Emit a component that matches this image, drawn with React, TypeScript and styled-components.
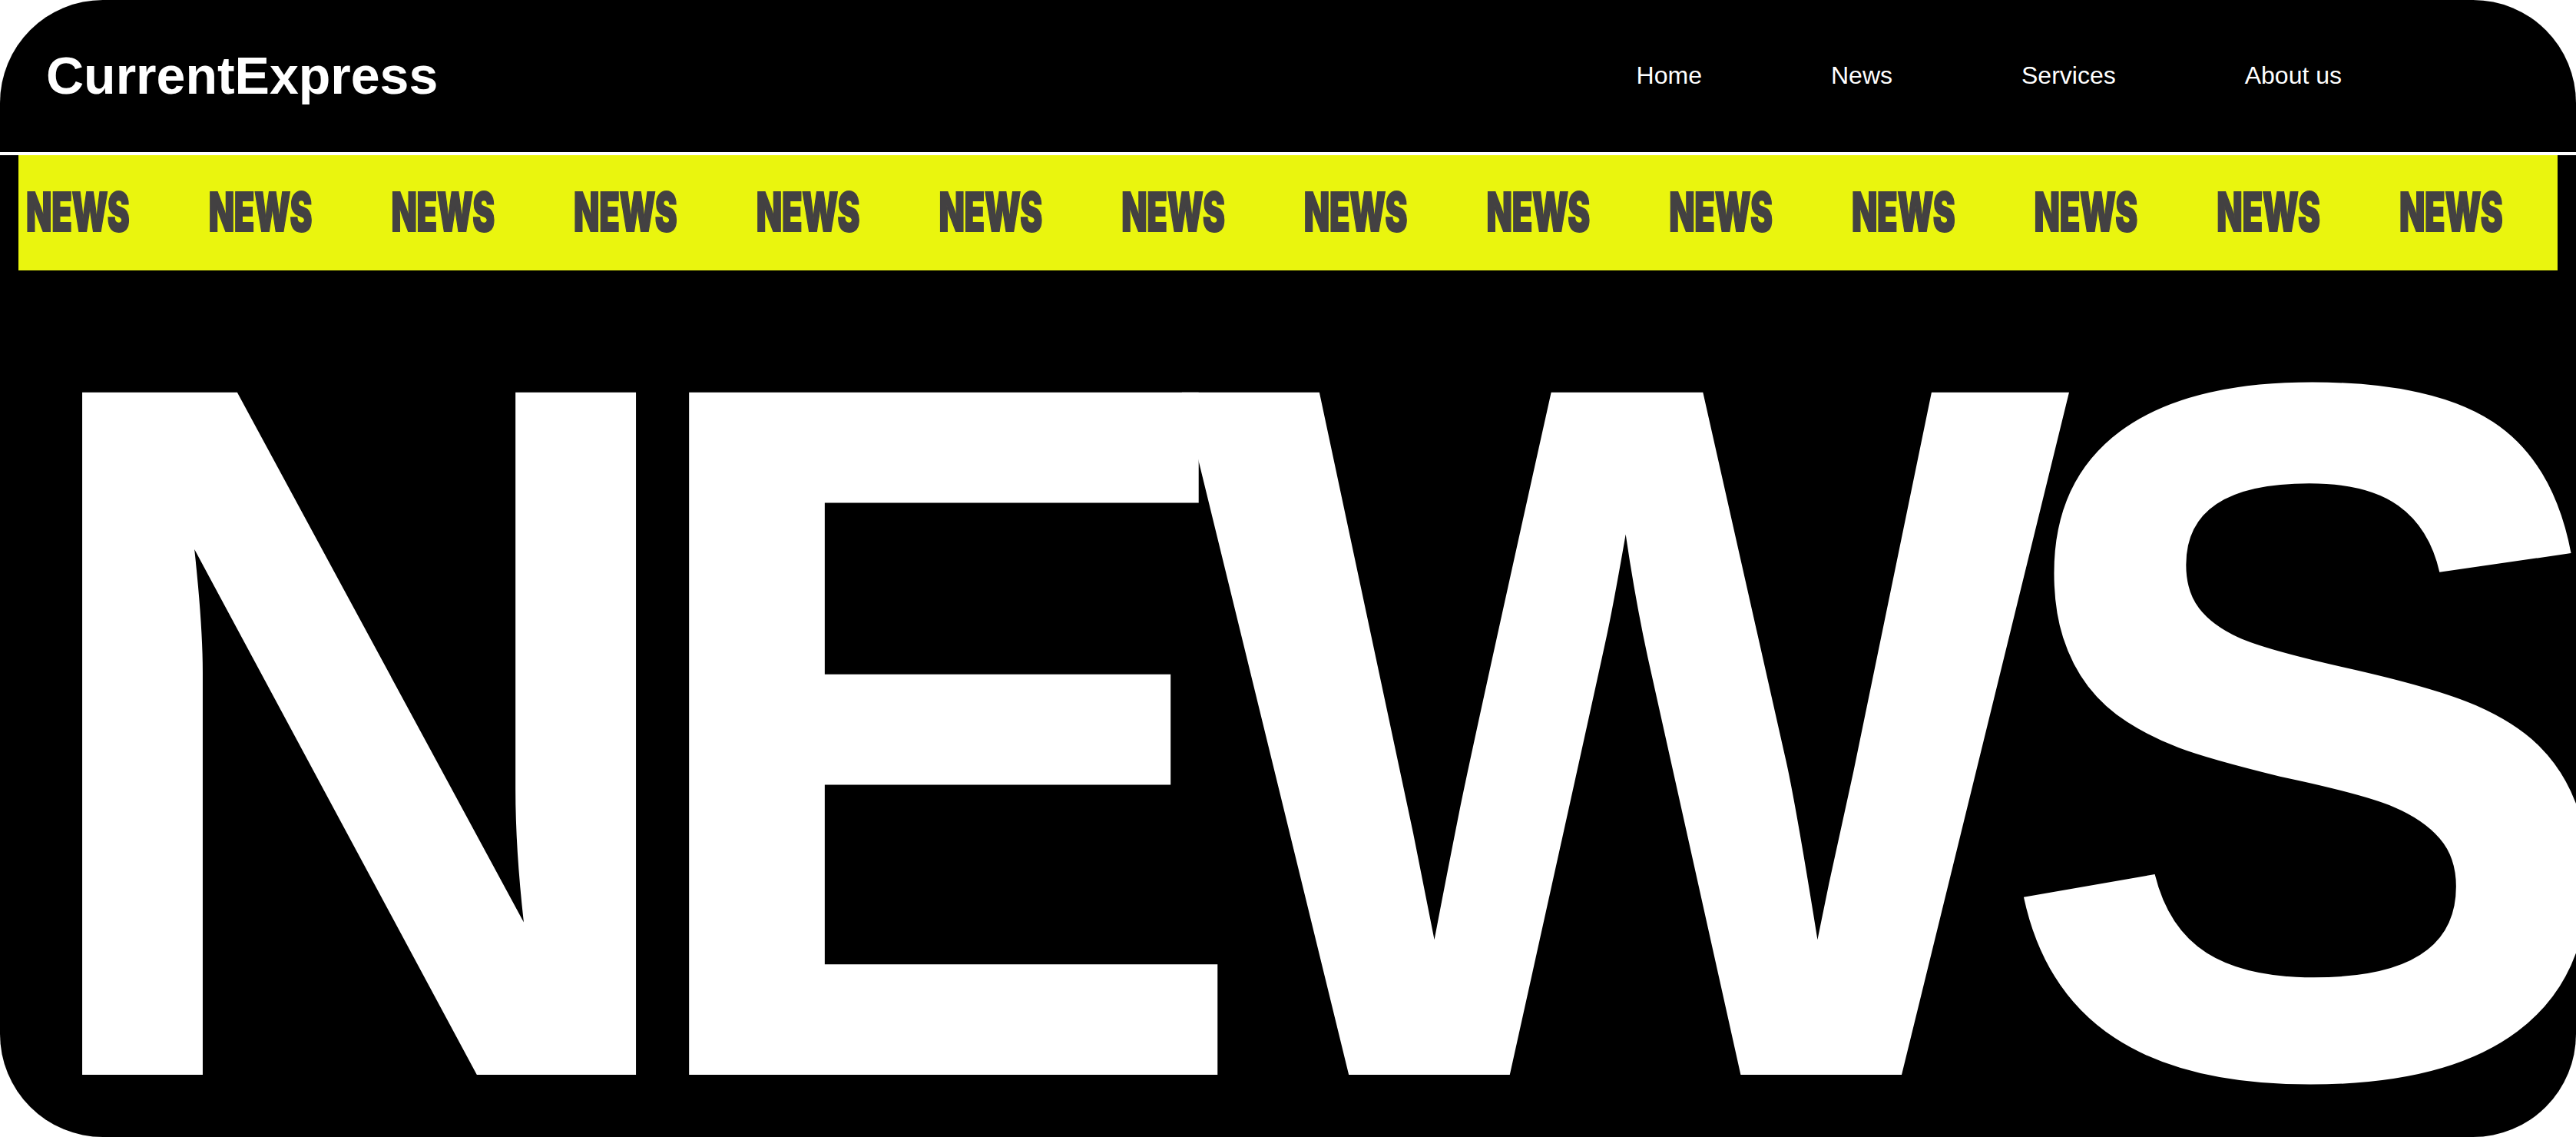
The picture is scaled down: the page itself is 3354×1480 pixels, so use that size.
import React from "react";
import styled, { createGlobalStyle } from "styled-components";

const GlobalStyle = createGlobalStyle`
  * { box-sizing: border-box; }
  html, body { margin: 0; padding: 0; background: #ffffff; }
  body { font-family: "Liberation Sans", Arial, sans-serif; }
`;

const Page = styled.div`
  width: 100%;
  height: 1480px;
  background: #000000;
  border-radius: 134px;
  overflow: hidden;
  display: flex;
  flex-direction: column;
`;

const Header = styled.header`
  height: 202px;
  flex: 0 0 auto;
  display: flex;
  align-items: center;
  justify-content: space-between;
  padding: 0 305px 2px 60px;
  border-bottom: 4px solid #ffffff;
`;

const Logo = styled.div`
  color: #ffffff;
  font-family: "Liberation Sans", Arial, sans-serif;
  font-weight: 700;
  font-size: 68px;
  line-height: 1;
`;

const Nav = styled.nav`
  display: flex;
  align-items: center;
  gap: 168px;
`;

const NavLink = styled.a`
  color: #ffffff;
  text-decoration: none;
  font-family: "Liberation Sans", Arial, sans-serif;
  font-size: 32px;
  line-height: 1;
`;

const Ticker = styled.div`
  flex: 0 0 auto;
  height: 150px;
  margin: 0 24px;
  background: #eaf50e;
  display: flex;
  align-items: center;
  gap: 101.7px;
  padding-left: 10px;
  overflow: hidden;
`;

const TickerItem = styled.span`
  flex: 0 0 136px;
  width: 136px;
  min-width: 0;
  display: inline-block;
  color: #434142;
  -webkit-text-stroke: 1.2px #434142;
  font-family: Inter, "Liberation Sans", sans-serif;
  font-weight: 900;
  font-size: 43.5px;
  letter-spacing: -0.3px;
  line-height: 1;
  white-space: nowrap;
  transform: scaleY(1.6);
  transform-origin: center;
`;

const HeroRow = styled.div`
  padding-left: 24.5px;
  white-space: nowrap;
`;

const HeroText = styled.span`
  display: inline-block;
  color: #ffffff;
  font-family: "Liberation Sans", Arial, sans-serif;
  font-weight: 700;
  font-size: 1291px;
  letter-spacing: -100.6px;
  line-height: 1199px;
  transform: scaleX(0.95);
  transform-origin: left top;
`;

const navItems = ["Home", "News", "Services", "About us"];

export default function App() {
  return (
    <>
      <GlobalStyle />
      <Page>
        <Header>
          <Logo>CurrentExpress</Logo>
          <Nav>
            {navItems.map((n) => (
              <NavLink key={n} href="#">
                {n}
              </NavLink>
            ))}
          </Nav>
        </Header>
        <Ticker>
          {Array.from({ length: 14 }).map((_, i) => (
            <TickerItem key={i}>NEWS</TickerItem>
          ))}
        </Ticker>
        <HeroRow>
          <HeroText>NEWS</HeroText>
        </HeroRow>
      </Page>
    </>
  );
}
